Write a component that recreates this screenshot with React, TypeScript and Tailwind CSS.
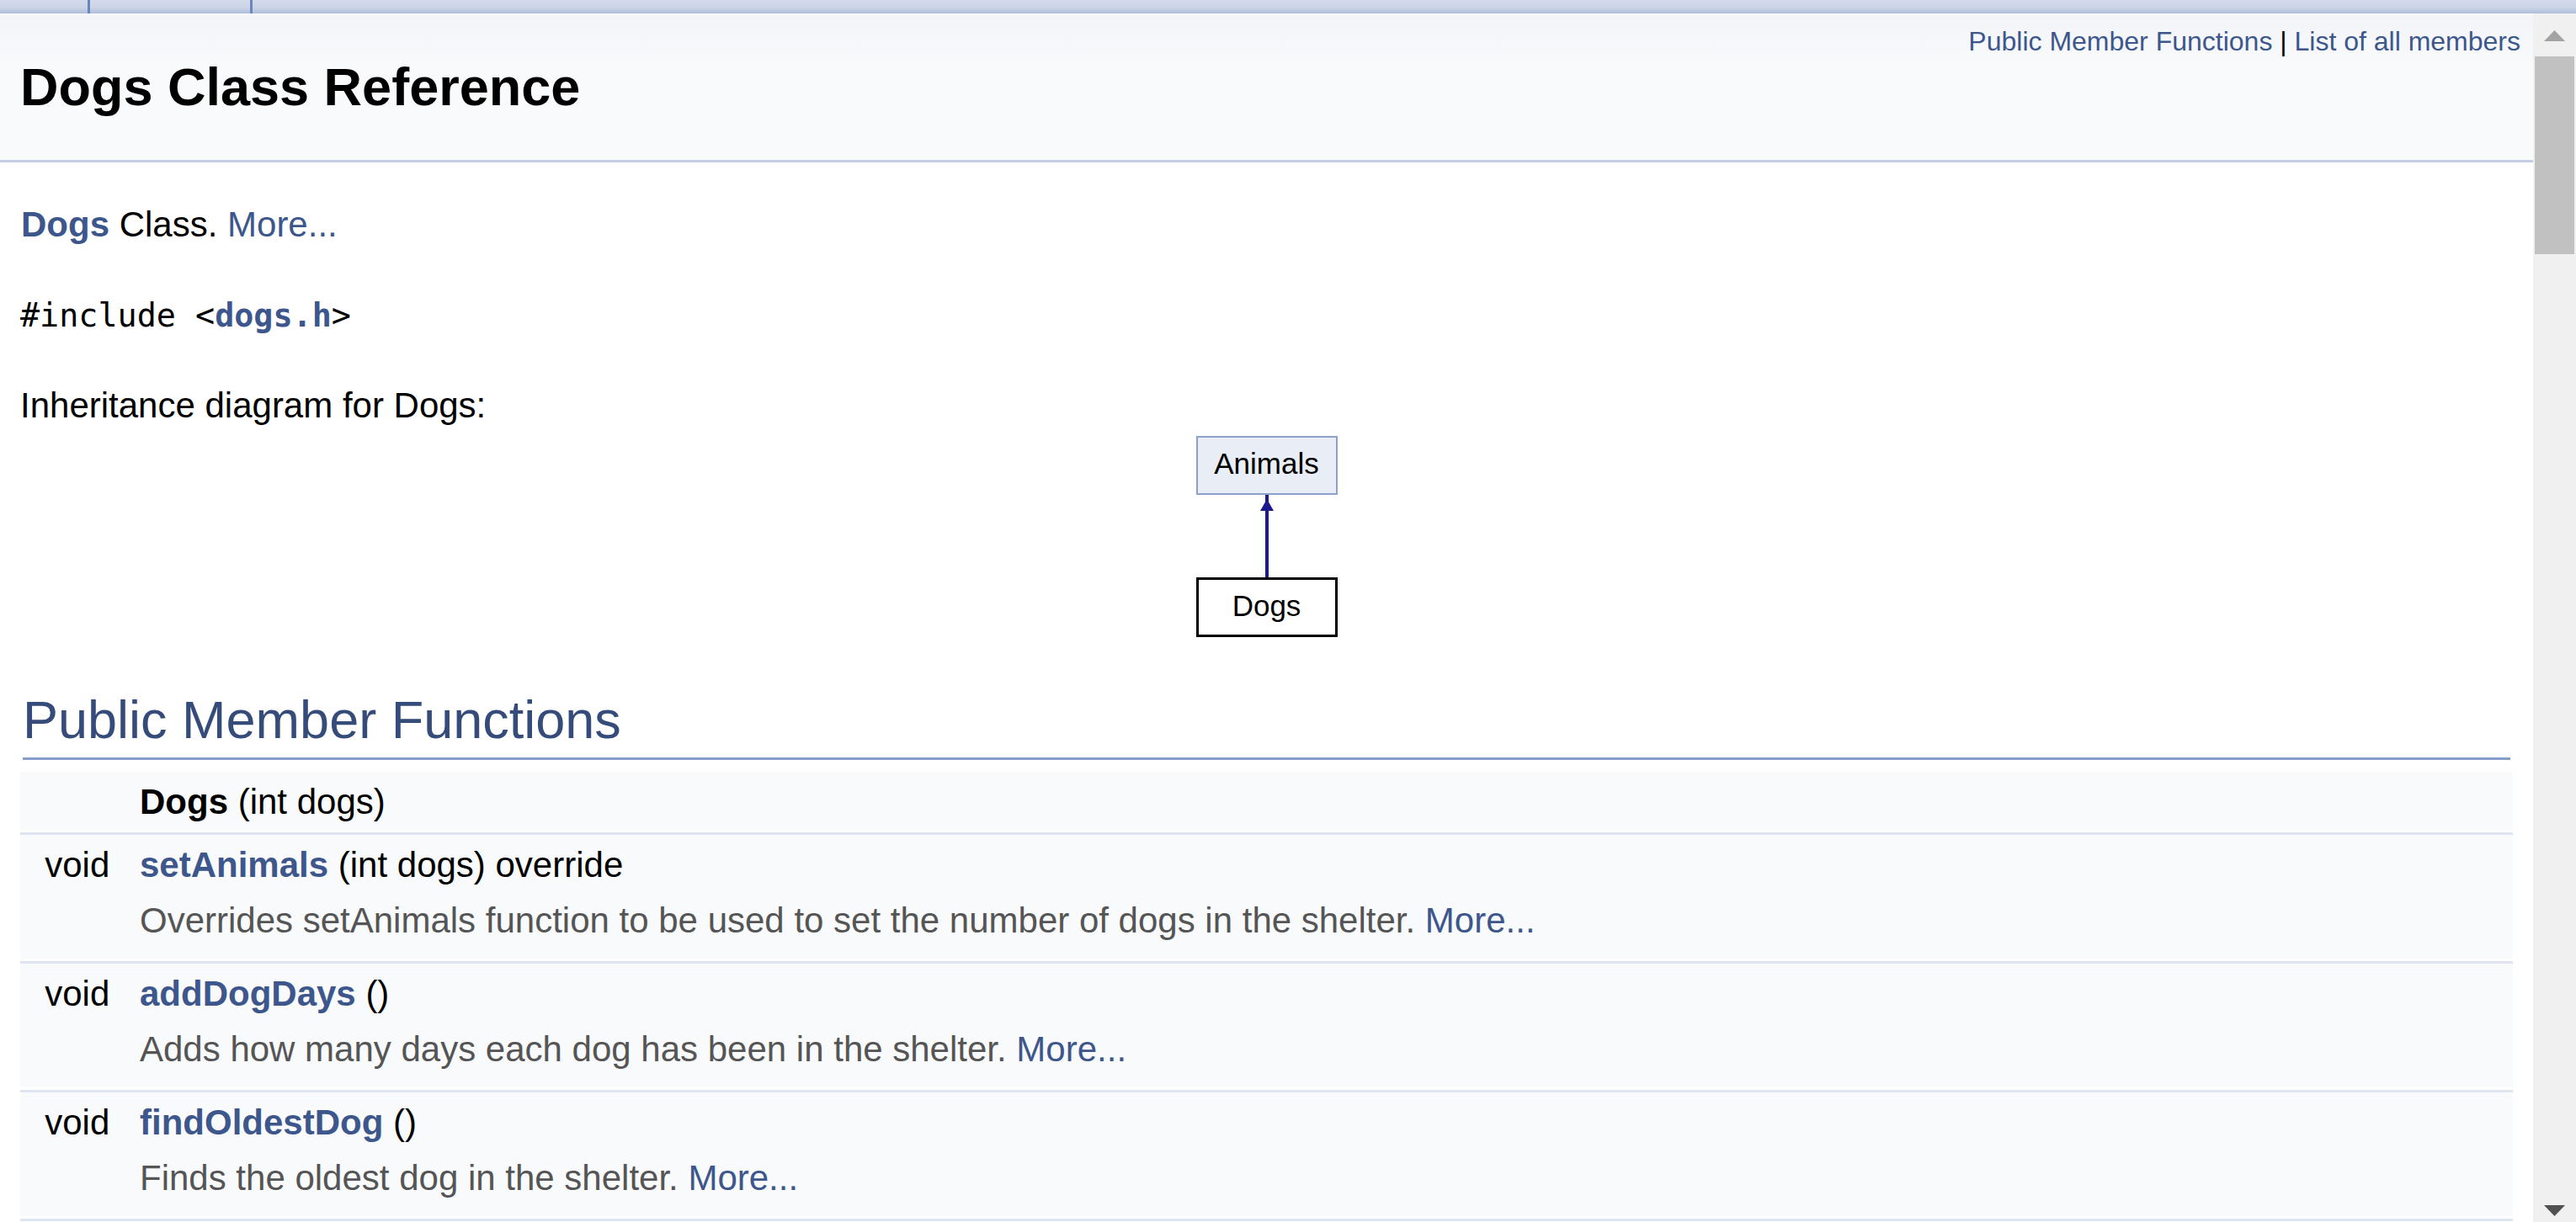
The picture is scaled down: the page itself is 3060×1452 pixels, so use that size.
import React from "react";

const LINK = "text-[#3d578c]";

function Sep() {
  return (
    <div>
      <div className="h-[3px]" />
      <div className="h-[3px] bg-[#dee4f0]" />
    </div>
  );
}

function Member({
  left,
  right,
  desc,
}: {
  left: string;
  right: React.ReactNode;
  desc?: string;
}) {
  return (
    <div>
      <div className="flex bg-[#f9fafc]">
        <div className="w-[118px] shrink-0 pt-[3px] text-right leading-[66px] whitespace-nowrap">
          {left}
          {"\u00a0"}
        </div>
        <div className="flex-1 pt-[3px] pl-[24px] leading-[66px] whitespace-nowrap">{right}</div>
      </div>
      {desc && (
        <div className="flex bg-[#f9fafc] pb-[12px]">
          <div className="w-[118px] shrink-0" />
          <div className="flex-1 pl-[24px] leading-[66px] text-[#555555] whitespace-nowrap">
            {desc} <span className={LINK}>More...</span>
          </div>
        </div>
      )}
      <Sep />
    </div>
  );
}

function Diagram() {
  return (
    <div className="flex flex-col items-center mt-[3px]">
      <div className="w-[168px] h-[70px] border-2 border-[#8ca2cc] bg-[#e8edf6] flex items-center justify-center text-[35px] leading-none text-black pb-[6px]">
        Animals
      </div>
      <svg width="30" height="98" viewBox="0 0 30 98" className="block">
        <line x1="15" y1="0" x2="15" y2="98" stroke="#1a1a8c" strokeWidth="4" />
        <polygon points="15,5 7,19 23,19" fill="#1a1a8c" />
      </svg>
      <div className="w-[168px] h-[71px] border-[3px] border-black bg-white flex items-center justify-center text-[35px] leading-none text-black pb-[4px]">
        Dogs
      </div>
    </div>
  );
}

function Scrollbar() {
  return (
    <div className="w-[51px] shrink-0 bg-[#f0f0f0] relative">
      <svg className="absolute left-[13px] top-[20px]" width="25" height="13" viewBox="0 0 25 13">
        <polygon points="12.5,0 0,13 25,13" fill="#a3a3a3" />
      </svg>
      <div className="absolute left-[2px] right-[2px] top-[51px] h-[235px] bg-[#c1c1c1]" />
      <svg className="absolute left-[13px] bottom-[7px]" width="25" height="13" viewBox="0 0 25 13">
        <polygon points="0,0 25,0 12.5,13" fill="#505050" />
      </svg>
    </div>
  );
}

export default function App() {
  return (
    <div className="w-[3060px] h-[1452px] overflow-hidden flex flex-col bg-white text-black font-['Liberation_Sans',Arial,sans-serif]">
      {/* top nav strip */}
      <div className="h-[16px] shrink-0 flex bg-[linear-gradient(to_bottom,#d3dbea,#ccd5e7_55%,#b0bed9)]">
        <div className="w-[107px] border-r-[3px] border-[#6a86bf]" />
        <div className="w-[193px] border-r-[3px] border-[#6a86bf]" />
        <div className="flex-1" />
      </div>

      <div className="flex flex-1 min-h-0">
        <div className="flex-1 min-w-0 overflow-hidden">
          {/* header */}
          <div className="h-[177px] border-b-[3px] border-[#c4cfe5] bg-[linear-gradient(to_bottom,#f8f9fb_0px,#f2f4f8_4px,#f9fafc_60px)] flex">
            <div className="flex-1 pt-[45px] pl-[24px]">
              <div className="text-[63px] leading-[84px] font-bold">Dogs Class Reference</div>
            </div>
            <div className="shrink-0 pr-[15px] text-[32px] leading-[66px] whitespace-nowrap">
              <span className={LINK}>Public Member Functions</span> |{" "}
              <span className={LINK}>List of all members</span>
            </div>
          </div>

          {/* contents */}
          <div className="mx-[24px] text-[42px]">
            <div className="mt-[41px] ml-[1px] leading-[66px]">
              <span className={`${LINK} font-bold`}>Dogs</span> Class.{" "}
              <span className={LINK}>More...</span>
            </div>
            <div className="mt-[42px] leading-[66px] font-['DejaVu_Sans_Mono',monospace] text-[38.4px]">
              #include &lt;<span className={`${LINK} font-bold`}>dogs.h</span>&gt;
            </div>
            <div className="mt-[41px] leading-[66px]">Inheritance diagram for Dogs:</div>

            <Diagram />

            <div className="mt-[41px] mx-[3px] pt-[24px] pb-[12px] border-b-[3px] border-[#879ecb] text-[63px] leading-[66px] text-[#354c7b]">
              Public Member Functions
            </div>

            <div className="mt-[14px]">
              <Member
                left=""
                right={
                  <>
                    <span className="font-bold">Dogs</span> (int dogs)
                  </>
                }
              />
              <Member
                left="void"
                right={
                  <>
                    <span className={`${LINK} font-bold`}>setAnimals</span> (int dogs) override
                  </>
                }
                desc="Overrides setAnimals function to be used to set the number of dogs in the shelter."
              />
              <Member
                left="void"
                right={
                  <>
                    <span className={`${LINK} font-bold`}>addDogDays</span> ()
                  </>
                }
                desc="Adds how many days each dog has been in the shelter."
              />
              <Member
                left="void"
                right={
                  <>
                    <span className={`${LINK} font-bold`}>findOldestDog</span> ()
                  </>
                }
                desc="Finds the oldest dog in the shelter."
              />
            </div>
          </div>
        </div>
        <Scrollbar />
      </div>
    </div>
  );
}
